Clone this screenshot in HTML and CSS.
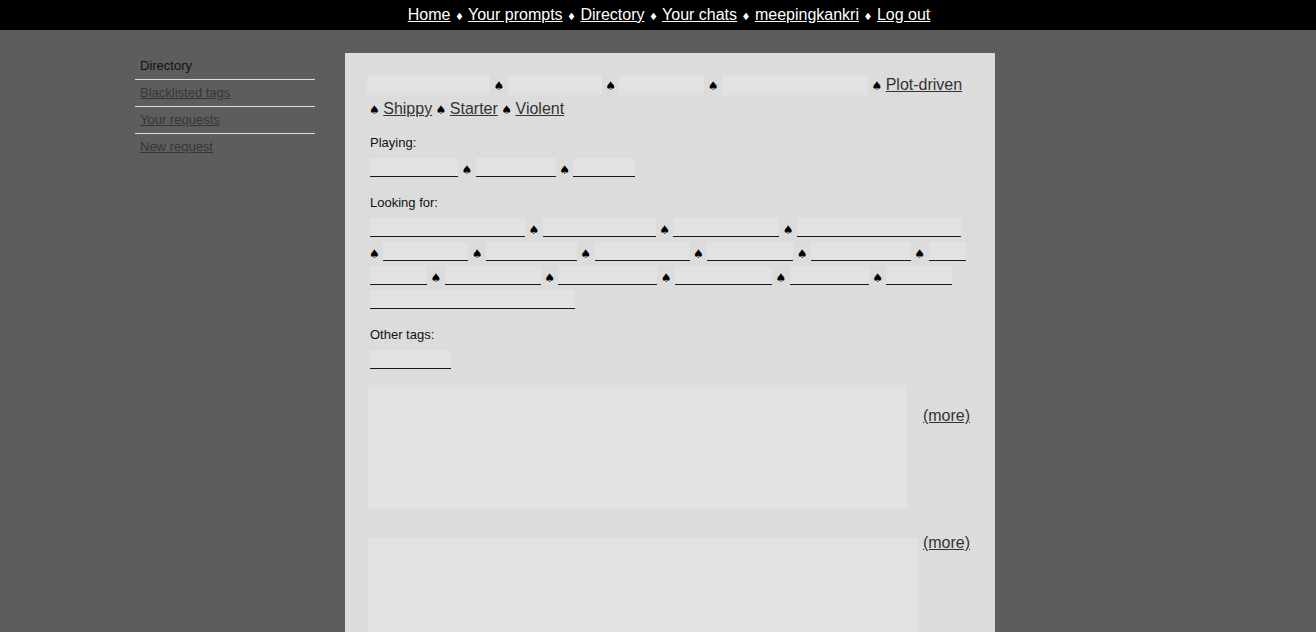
FILE: index.html
```html
<!DOCTYPE html>
<html>
<head>
<meta charset="utf-8">
<title>Directory</title>
<link rel="stylesheet" href="styles.css">
</head>
<body>
<nav class="topbar">
  <a href="#">Home</a> <span class="dia">♦</span> <a href="#">Your prompts</a> <span class="dia">♦</span> <a href="#">Directory</a> <span class="dia">♦</span> <a href="#">Your chats</a> <span class="dia">♦</span> <a href="#">meepingkankri</a> <span class="dia">♦</span> <a href="#">Log out</a>
</nav>
<div class="wrap">
  <ul class="sidebar">
    <li class="current">Directory</li>
    <li><a href="#">Blacklisted tags</a></li>
    <li><a href="#">Your requests</a></li>
    <li><a href="#">New request</a></li>
  </ul>
  <main class="panel">
    <section class="prompt">
      <p class="tags"><span class="redact box lead" style="width:123px"></span> <span class="sp">♠</span> <span class="redact box" style="width:94px"></span> <span class="sp">♠</span> <span class="redact box" style="width:85px"></span> <span class="sp">♠</span> <span class="redact box" style="width:146px"></span> <span class="sp">♠</span> <a href="#" class="tag">Plot-driven</a><br><span class="sp">♠</span> <a href="#" class="tag">Shippy</a> <span class="sp">♠</span> <a href="#" class="tag">Starter</a> <span class="sp">♠</span> <a href="#" class="tag">Violent</a></p>
      <p class="label">Playing:</p>
      <p class="tags"><a href="#" class="redact line" style="width:88px"></a> <span class="sp">♠</span> <a href="#" class="redact line" style="width:80px"></a> <span class="sp">♠</span> <a href="#" class="redact line" style="width:62px"></a></p>
      <p class="label">Looking for:</p>
      <p class="tags"><a href="#" class="redact line" style="width:155px"></a> <span class="sp">♠</span> <a href="#" class="redact line" style="width:113px"></a> <span class="sp">♠</span> <a href="#" class="redact line" style="width:106px"></a> <span class="sp">♠</span> <a href="#" class="redact line" style="width:164px"></a><br><span class="sp">♠</span> <a href="#" class="redact line" style="width:85px"></a> <span class="sp">♠</span> <a href="#" class="redact line" style="width:91px"></a> <span class="sp">♠</span> <a href="#" class="redact line" style="width:95px"></a> <span class="sp">♠</span> <a href="#" class="redact line" style="width:86px"></a> <span class="sp">♠</span> <a href="#" class="redact line" style="width:100px"></a> <span class="sp">♠</span> <a href="#" class="redact line" style="width:37px"></a><br><a href="#" class="redact line" style="width:57px"></a> <span class="sp">♠</span> <a href="#" class="redact line" style="width:96px"></a> <span class="sp">♠</span> <a href="#" class="redact line" style="width:99px"></a> <span class="sp">♠</span> <a href="#" class="redact line" style="width:97px"></a> <span class="sp">♠</span> <a href="#" class="redact line" style="width:79px"></a> <span class="sp">♠</span> <a href="#" class="redact line" style="width:66px"></a><br><a href="#" class="redact line" style="width:205px"></a></p>
      <p class="label">Other tags:</p>
      <p class="tags"><a href="#" class="redact line" style="width:81px"></a></p>
      <div class="desc">
        <div class="redact text first"></div>
        <a href="#" class="more more-low">(more)</a>
      </div>
    </section>
    <section class="prompt">
      <div class="desc">
        <div class="redact text second"></div>
        <a href="#" class="more more-high">(more)</a>
      </div>
    </section>
  </main>
</div>
</body>
</html>
```
FILE: styles.css
```css
html, body {
  margin: 0;
  padding: 0;
}
body {
  background: #5e5d5d;
  font-family: "Liberation Sans", Arial, sans-serif;
  height: 632px;
  overflow: hidden;
}
.topbar {
  background: #000;
  color: #fff;
  height: 30px;
  line-height: 29px;
  font-size: 16px;
  text-align: center;
  padding-left: 22px;
}
.topbar a {
  color: #fff;
  text-decoration: underline;
}
.dia {
  font-size: 10px;
  line-height: 16px;
  font-family: "DejaVu Sans", sans-serif;
}
.wrap {
  width: 1046px;
  margin: 0 auto;
  display: flex;
  gap: 30px;
  padding-top: 23px;
}
.sidebar {
  list-style: none;
  margin: 0;
  padding: 0;
  width: 180px;
  flex: none;
  font-size: 13px;
}
.sidebar li {
  padding: 5px;
  line-height: 16px;
  border-bottom: 1px solid #dedede;
  color: #111;
}
.sidebar li:last-child {
  border-bottom: none;
}
.sidebar a {
  color: #363636;
  text-decoration: underline;
}
.panel {
  width: 650px;
  flex: none;
  background: #dcdcdc;
  padding: 20px 25px 0 25px;
  box-sizing: border-box;
  min-height: 600px;
}
.prompt p {
  margin: 0;
}
.tags {
  font-size: 16px;
  line-height: 24px;
  color: #000;
}
.tag {
  color: #333;
  text-decoration: underline;
}
.sp {
  font-family: "DejaVu Sans", sans-serif;
  font-size: 12px;
  line-height: 14px;
  margin: 0 -1px;
}
.prompt .label {
  font-size: 13px;
  line-height: 16px;
  color: #111;
  margin: 14px 0 6px;
}
.redact {
  display: inline-block;
  background: #e2e2e2;
}
.redact.box {
  height: 20px;
  vertical-align: -5px;
}
.redact.lead {
  margin-left: -3px;
}
.redact.line {
  height: 18px;
  vertical-align: -3px;
  border-bottom: 1px solid #1a1a1a;
}
.desc {
  display: flex;
  justify-content: space-between;
  align-items: flex-start;
  margin-top: 12px;
}
.redact.text {
  display: block;
  margin-left: -2px;
}
.redact.text.first {
  width: 539px;
  height: 124px;
}
.redact.text.second {
  width: 550px;
  height: 110px;
}
.prompt + .prompt .desc {
  margin-top: 29px;
}
.more {
  font-size: 16px;
  line-height: 24px;
  color: #333;
  text-decoration: underline;
}
.more-low {
  margin-top: 19px;
}
.more-high {
  margin-top: -7px;
}
```
